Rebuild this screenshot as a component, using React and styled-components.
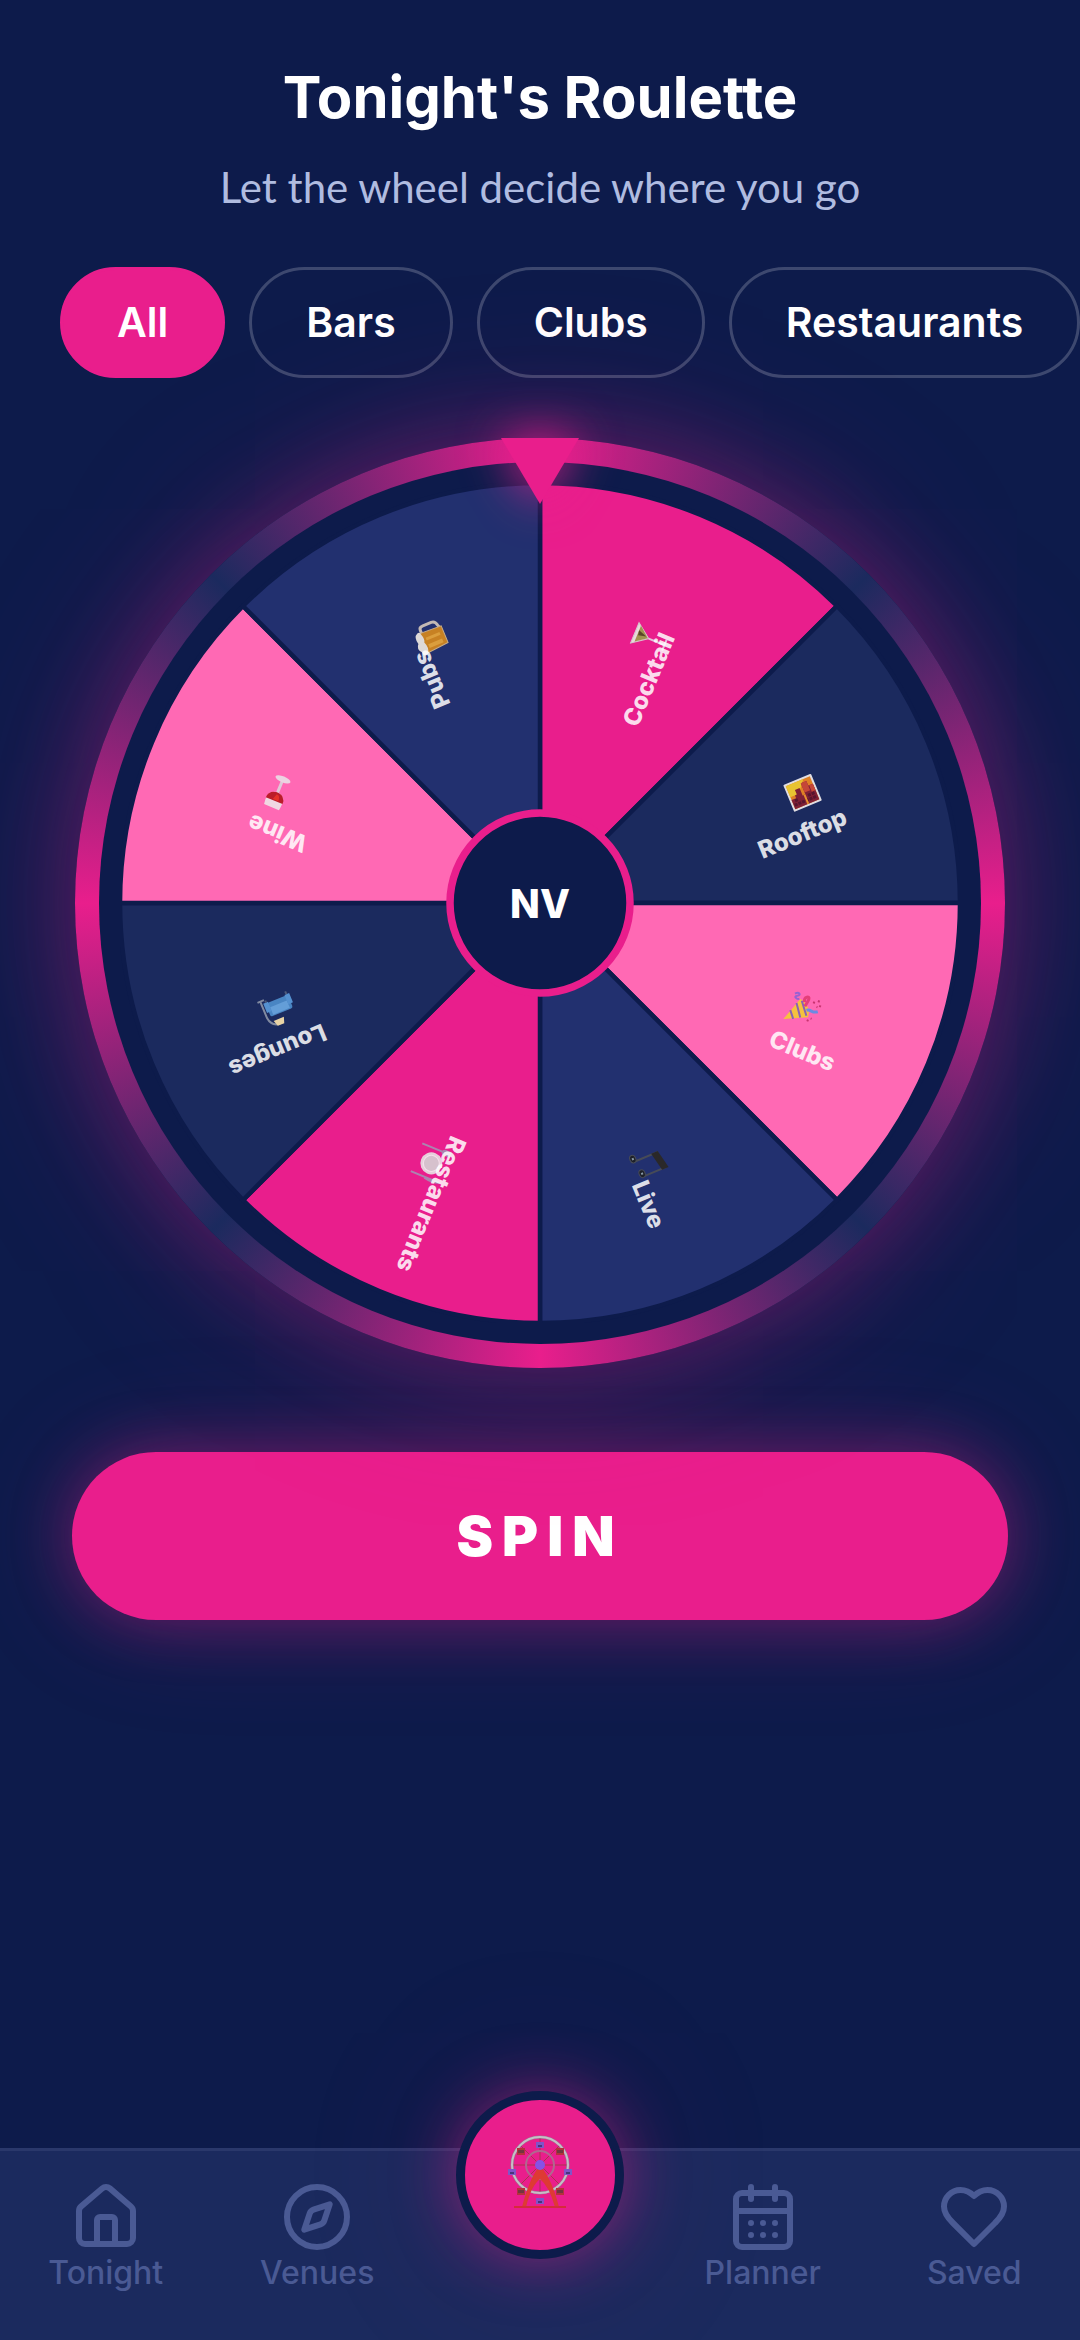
import React, { useState } from 'react';
import styled, { createGlobalStyle, ThemeProvider } from 'styled-components';
import { House, Compass, CalendarDays } from 'lucide-react';

const theme = {
  bg: '#0D1B4B',
  surface: '#1B2A5E',
  surfaceLight: '#22306F',
  primary: '#E91E8C',
  primaryLight: '#FF69B4',
  text: '#FFFFFF',
  textSecondary: '#B0BCE0',
  textMuted: '#4A5A94',
  border: 'rgba(255, 255, 255, 0.2)',
  glow: '0 0 60px rgba(233, 30, 140, 0.35), 0 0 120px rgba(233, 30, 140, 0.2)',
  glowWide: '0 0 90px rgba(233, 30, 140, 0.3), 0 0 180px rgba(233, 30, 140, 0.2)',
};

const filters = ['All', 'Bars', 'Clubs', 'Restaurants'];

// Emoji drawings, each one centred on 0,0
const CocktailArt = () => (
  <g>
    <path d="M-11 -15H11L0 0Z" fill="#e9efe4" stroke="#d5d8d5" strokeWidth="1" />
    <path d="M-8 -12H9L0 -1Z" fill="#9aa04a" />
    <path d="M-1 -11L4 -12 1 -3Z" fill="#4c4a1e" />
    <path d="M0 0V16M-6 17H6" stroke="#e3d3e4" strokeWidth="2" />
  </g>
);

const SunsetArt = () => (
  <g>
    <rect x="-15" y="-14" width="30" height="29" rx="1" fill="#f6f1f1" />
    <rect x="-13" y="-12" width="26" height="25" fill="#f58a1f" />
    <path d="M-13 -12H6L-4 0H-13Z" fill="#ffd42e" />
    <path d="M-13 13V3H-8V0H-6V-5H-1V3H2V-9H8V-4H13V13Z" fill="#8c1f32" />
    <path d="M2 -9H8V1H2ZM9 -4H13V3H9Z" fill="#d84a34" />
    <path d="M-12 9H12M-10 5H-6M4 5H11" stroke="#5e142a" strokeWidth="3" strokeDasharray="3 1" />
    <path d="M1 3V13" stroke="#ff9b2a" strokeWidth="2" />
  </g>
);

const PartyArt = () => (
  <g>
    <path d="M-14 16L-6 -9C2 -8 8 -2 8 5Z" fill="#f5cc32" />
    <path d="M-11 5L-5 12M-8 -4L1 8M-4 -8L6 4" stroke="#7d62b5" strokeWidth="2" />
    <path d="M-13 -12C-10 -16 -6 -13 -10 -11S-9 -7 -7 -9" fill="none" stroke="#8d62d6" strokeWidth="2" />
    <path d="M-1 -8C-4 -13 2 -16 2 -12S1 -6 1 -4" fill="none" stroke="#e23b73" strokeWidth="3" />
    <path d="M4 -1C8 -4 10 0 15 -4" fill="none" stroke="#5c8fe8" strokeWidth="3" />
    <path d="M7 -11H9M11 -14H13M14 -10H16M12 -8H13M8 8H10M11 5H12" stroke="#c32f69" strokeWidth="2" />
  </g>
);

const MusicArt = () => (
  <g stroke="#4c4f55" fill="#1d1f22">
    <path d="M-7 12V-13M10 9V-15" strokeWidth="2" />
    <path d="M-8 -13L11 -17V-10L-8 -6Z" fill="#2b2822" stroke="none" />
    <ellipse cx="-10" cy="13" rx="4" ry="3" />
    <ellipse cx="7" cy="10" rx="4" ry="3" />
    <path d="M-11 13H-9M6 10H8" stroke="#93a4ad" strokeWidth="2" />
  </g>
);

const PlateArt = () => (
  <g>
    <circle r="11" fill="#e6e3e4" />
    <circle r="8" fill="#d4d3d5" stroke="#f7f5f6" />
    <path d="M-15 16V-5M-17 -15V-8Q-15 -4 -13 -8V-15M-15 -15V-5M15 16V-15Q18 -8 16 1" fill="none" stroke="#a590b4" strokeWidth="2" />
  </g>
);

const LoungeArt = () => (
  <g>
    <path d="M13 13V-4Q12 -13 3 -14M9 14H16" fill="none" stroke="#8d95a8" strokeWidth="2" />
    <path d="M-1 -15H6L8 -9H-3Z" fill="#ffe6ad" />
    <rect x="-15" y="-4" width="24" height="14" rx="2" fill="#4f8fce" />
    <path d="M-12 -3H6V5H-12Z" fill="#6dabe6" />
    <path d="M-17 1H-12V11H-17ZM6 1H11V11H6Z" fill="#5c9ddd" />
    <path d="M-14 11V14M8 11V13" stroke="#56627e" strokeWidth="2" />
  </g>
);

const WineArt = () => (
  <g>
    <path d="M-8 -16H8Q11 -1 0 0Q-11 -1 -8 -16Z" fill="#efe4e8" />
    <path d="M-9 -9H9Q9 -1 0 0Q-9 -1 -9 -9Z" fill="#b4141c" />
    <path d="M-4 -8H2L0 -2Q-4 -2 -4 -8Z" fill="#e22a1b" />
    <path d="M0 0V12" stroke="#ded3dc" strokeWidth="3" />
    <ellipse cy="14" rx="8" ry="3" fill="#eadfe6" />
  </g>
);

const BeerArt = () => (
  <g>
    <path d="M7 -7H12Q15 -7 15 -3V6Q15 10 10 11L7 12" fill="none" stroke="#d5c8bc" strokeWidth="3" />
    <path d="M-12 -10H9L8 14H-10Z" fill="#d98a1b" stroke="#d9b98a" />
    <path d="M-8 -5H-4V10H-8ZM0 -5H3V10H0Z" fill="#f0aa38" />
    <path d="M-13 -9Q-15 -14 -9 -14Q-4 -18 0 -14Q8 -16 10 -11Q11 -8 8 -8Q2 -6 -1 -8Q-8 -5 -13 -9Z" fill="#f2ece4" />
  </g>
);

const FerrisWheelArt = () => (
  <svg width="100" height="100" viewBox="-1 5 100 100" aria-hidden="true">
    <path d="M49 17V73M21 45H77M29 25L69 65M69 25L29 65" stroke="#a8364f" strokeWidth="1" />
    <circle cx="49" cy="45" r="28" fill="none" stroke="#8f8590" strokeWidth="3" />
    <circle cx="49" cy="45" r="28" fill="none" stroke="#c9bcc7" strokeWidth="2" />
    <circle cx="49" cy="45" r="14" fill="none" stroke="#b0688f" strokeWidth="2" />
    {[[49, 25], [77, 52], [49, 81], [21, 52]].map(([x, y]) => (
      <g key={`${x}-${y}`}>
        <path d={`M${x - 4} ${y - 3}H${x + 4}V${y + 3}H${x - 4}Z`} fill="#8054c8" />
        <path d={`M${x - 2} ${y}H${x + 2}V${y + 2}H${x - 2}Z`} fill="#48357c" />
      </g>
    ))}
    {[[30, 32], [69, 32], [69, 72], [30, 72]].map(([x, y]) => (
      <g key={`${x}-${y}`}>
        <path d={`M${x - 4} ${y - 4}H${x + 4}V${y + 3}H${x - 4}Z`} fill="#b5313c" />
        <path d={`M${x - 3} ${y - 2}H${x + 3}V${y + 1}H${x - 3}Z`} fill="#71363f" />
      </g>
    ))}
    <path d="M47 48H51Q61 60 68 87H64Q58 66 49 59Q40 66 35 87H31Q38 60 47 48Z" fill="#de3a34" />
    <path d="M23 87H75" stroke="#d62b3b" strokeWidth="2" />
    <circle cx="49" cy="45" r="5" fill="#8752e6" />
  </svg>
);

const HeartIcon = () => (
  <svg width="72" height="72" viewBox="0 0 24 24" fill="none" stroke="currentColor" strokeWidth="2" strokeLinecap="round" strokeLinejoin="round" aria-hidden="true">
    <path d="M19 14c1.49-1.46 3-3.21 3-5.5A5.5 5.5 0 0 0 16.5 3c-1.76 0-3 .5-4.5 2-1.5-1.5-2.74-2-4.5-2A5.5 5.5 0 0 0 2 8.5c0 2.3 1.5 4.05 3 5.5l7 7Z" />
  </svg>
);

const segments = [
  { label: 'Cocktail', color: theme.primary, Art: CocktailArt },
  { label: 'Rooftop', color: theme.surface, Art: SunsetArt },
  { label: 'Clubs', color: theme.primaryLight, Art: PartyArt },
  { label: 'Live', color: theme.surfaceLight, Art: MusicArt },
  { label: 'Restaurants', color: theme.primary, Art: PlateArt },
  { label: 'Lounges', color: theme.surface, Art: LoungeArt },
  { label: 'Wine', color: theme.primaryLight, Art: WineArt },
  { label: 'Pubs', color: theme.surfaceLight, Art: BeerArt },
];

const point = (radius, angle) => {
  const rad = (angle * Math.PI) / 180;
  return [radius * Math.cos(rad), radius * Math.sin(rad)];
};

const Wheel = () => (
  <WheelSvg viewBox="-420 -420 840 840" role="img" aria-label="Roulette wheel">
    {segments.map(({ label, color }, index) => {
      const [x1, y1] = point(420, index * 45 - 90);
      const [x2, y2] = point(420, index * 45 - 45);
      return (
        <path
          key={label}
          d={`M0 0L${x1} ${y1}A420 420 0 0 1 ${x2} ${y2}Z`}
          fill={color}
          stroke={theme.bg}
          strokeWidth="4.5"
        />
      );
    })}
    {segments.map(({ label, Art }, index) => {
      const angle = index * 45 - 67.5;
      const [x, y] = point(284, angle);
      return (
        <g key={label}>
          <g transform={`translate(${x} ${y - 2}) rotate(${angle})`} opacity="0.9">
            <Art />
          </g>
          <SegmentLabel transform={`translate(${x} ${y + 39}) rotate(${angle})`}>{label}</SegmentLabel>
        </g>
      );
    })}
    <circle r="90" fill={theme.bg} stroke={theme.primary} strokeWidth="7.5" />
    <HubLabel>NV</HubLabel>
  </WheelSvg>
);

const App = () => {
  const [activeFilter, setActiveFilter] = useState('All');

  return (
    <ThemeProvider theme={theme}>
      <GlobalStyle />
      <Page>
        <Header>
          <Title>Tonight's Roulette</Title>
          <Subtitle>Let the wheel decide where you go</Subtitle>
        </Header>

        <Main>
          <FilterBar>
            {filters.map(filter => (
              <FilterChip
                key={filter}
                type="button"
                $isActive={activeFilter === filter}
                onClick={() => setActiveFilter(filter)}
              >
                {filter}
              </FilterChip>
            ))}
          </FilterBar>

          <WheelRing>
            <WheelDisc>
              <Wheel />
            </WheelDisc>
            <Pointer viewBox="0 0 78 66" aria-hidden="true">
              <path d="M0 0H78L39 66Z" fill={theme.primary} />
            </Pointer>
          </WheelRing>

          <SpinButton type="button">SPIN</SpinButton>
        </Main>

        <BottomNav>
          <NavItem href="#tonight">
            <House size={72} />
            Tonight
          </NavItem>
          <NavItem href="#venues">
            <Compass size={72} />
            Venues
          </NavItem>
          <RouletteButton type="button" aria-label="Roulette">
            <FerrisWheelArt />
          </RouletteButton>
          <NavItem href="#planner">
            <CalendarDays size={72} />
            Planner
          </NavItem>
          <NavItem href="#saved">
            <HeartIcon />
            Saved
          </NavItem>
        </BottomNav>
      </Page>
    </ThemeProvider>
  );
};

// Styled Components
const GlobalStyle = createGlobalStyle`
  * {
    box-sizing: border-box;
  }

  body {
    margin: 0;
    background: ${theme.bg};
    color: ${theme.text};
    font-family: Inter, sans-serif;
  }

  button {
    font-family: inherit;
    cursor: pointer;
  }
`;

const Page = styled.div`
  display: flex;
  flex-direction: column;
  min-height: 100vh;
  overflow: hidden;
`;

const Header = styled.header`
  padding: 64px 60px 56px;
  text-align: center;
`;

const Title = styled.h1`
  margin: 0 0 33px;
  font-size: 58px;
  line-height: 66px;
  font-weight: 700;
`;

const Subtitle = styled.p`
  margin: 0;
  font-family: Lato, sans-serif;
  font-size: 42px;
  line-height: 48px;
  color: ${({ theme }) => theme.textSecondary};
`;

const Main = styled.main`
  flex: 1;
  display: flex;
  flex-direction: column;
  align-items: center;
  padding-bottom: 60px;
`;

const FilterBar = styled.div`
  align-self: stretch;
  display: flex;
  gap: 24px;
  padding: 0 60px;
  margin-bottom: 60px;
`;

const FilterChip = styled.button`
  flex-shrink: 0;
  padding: 27px 54px;
  border: 3px solid ${({ $isActive, theme }) => ($isActive ? theme.primary : theme.border)};
  border-radius: 60px;
  background: ${({ $isActive, theme }) => ($isActive ? theme.primary : 'transparent')};
  color: ${({ theme }) => theme.text};
  font-size: 41px;
  line-height: 51px;
  font-weight: 600;
`;

const WheelRing = styled.div`
  position: relative;
  width: calc(100% - 150px);
  max-width: 930px;
  aspect-ratio: 1;
  padding: 24px;
  margin-bottom: 84px;
  border-radius: 50%;
  background: conic-gradient(
    ${({ theme: t }) =>
      [t.primary, t.surface, t.primary, t.surface, t.primary, t.surface, t.primary, t.surface, t.primary].join(', ')}
  );
  box-shadow: ${({ theme }) => theme.glowWide};
`;

const WheelDisc = styled.div`
  height: 100%;
  padding: 21px;
  border-radius: 50%;
  background: ${({ theme }) => theme.bg};
`;

const WheelSvg = styled.svg`
  display: block;
  width: 100%;
  height: 100%;
`;

const SegmentLabel = styled.text`
  fill: rgba(255, 255, 255, 0.85);
  font-size: 24px;
  font-weight: 800;
  text-anchor: middle;
  dominant-baseline: central;
`;

const HubLabel = styled.text`
  fill: ${({ theme }) => theme.text};
  font-size: 39px;
  font-weight: 800;
  text-anchor: middle;
  dominant-baseline: central;
`;

const Pointer = styled.svg`
  position: absolute;
  top: 0;
  left: 50%;
  width: 78px;
  height: 66px;
  overflow: visible;
  transform: translateX(-50%);
  filter: drop-shadow(0 0 24px ${({ theme }) => theme.primary});
`;

const SpinButton = styled.button`
  width: calc(100% - 144px);
  padding: 48px;
  border: none;
  border-radius: 84px;
  background: ${({ theme }) => theme.primary};
  box-shadow: ${({ theme }) => theme.glow};
  color: ${({ theme }) => theme.text};
  font-size: 55px;
  line-height: 72px;
  font-weight: 900;
  letter-spacing: 9px;
`;

const BottomNav = styled.nav`
  display: grid;
  grid-template-columns: 1fr 1fr 234px 1fr 1fr;
  justify-items: center;
  padding: 30px 0 48px;
  border-top: 3px solid #2a386b;
  background: ${({ theme }) => theme.surface};
`;

const NavItem = styled.a`
  display: flex;
  flex-direction: column;
  align-items: center;
  color: ${({ theme }) => theme.textMuted};
  font-size: 32px;
  line-height: 39px;
  font-weight: 500;
  text-decoration: none;
`;

const RouletteButton = styled.button`
  display: flex;
  align-items: center;
  justify-content: center;
  width: 168px;
  height: 168px;
  margin-top: -90px;
  margin-bottom: -60px;
  padding: 0;
  border: 9px solid ${({ theme }) => theme.bg};
  border-radius: 50%;
  background: ${({ theme }) => theme.primary};
  box-shadow: 0 0 60px rgba(233, 30, 140, 0.5), 0 0 180px rgba(233, 30, 140, 0.15);
`;

export default App;
